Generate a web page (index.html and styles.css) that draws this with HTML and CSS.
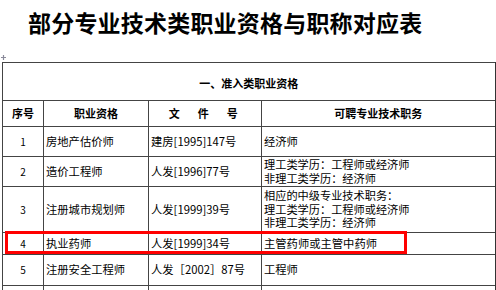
FILE: index.html
```html
<!DOCTYPE html>
<html lang="zh-CN">
<head>
    <meta charset="UTF-8">
    <title>部分专业技术类职业资格与职称对应表</title>
    <link rel="stylesheet" href="styles.css">
</head>
<body>
<h1 class="title">部分专业技术类职业资格与职称对应表</h1>
<div class="sheet">
    <svg class="handle" width="5" height="5" viewBox="0 0 5 5"><path d="M2.5 0V5M0 2.5H5" stroke="#8a8a9a" stroke-width="1.2"/></svg>
    <table class="grid">
        <colgroup>
            <col class="c-no">
            <col class="c-name">
            <col class="c-doc">
            <col class="c-duty">
        </colgroup>
        <tr class="r-caption">
            <td colspan="4" class="caption">一、准入类职业资格</td>
        </tr>
        <tr class="r-head">
            <th>序号</th>
            <th>职业资格</th>
            <th class="spaced">文　件　号</th>
            <th>可聘专业技术职务</th>
        </tr>
        <tr class="r-30">
            <td class="num">1</td>
            <td>房地产估价师</td>
            <td>建房[1995]147号</td>
            <td>经济师</td>
        </tr>
        <tr class="r-30">
            <td class="num">2</td>
            <td>造价工程师</td>
            <td>人发[1996]77号</td>
            <td class="duty">理工类学历：工程师或经济师<br>非理工类学历：经济师</td>
        </tr>
        <tr class="r-46">
            <td class="num">3</td>
            <td>注册城市规划师</td>
            <td>人发[1999]39号</td>
            <td class="duty">相应的中级专业技术职务：<br>理工类学历：工程师或经济师<br>非理工类学历：经济师</td>
        </tr>
        <tr class="r-22">
            <td class="num">4</td>
            <td>执业药师</td>
            <td>人发[1999]34号</td>
            <td>主管药师或主管中药师</td>
        </tr>
        <tr class="r-31">
            <td class="num">5</td>
            <td>注册安全工程师</td>
            <td>人发［2002］87号</td>
            <td>工程师</td>
        </tr>
        <tr class="r-30">
            <td></td>
            <td></td>
            <td></td>
            <td></td>
        </tr>
    </table>
    <div class="mark"></div>
</div>
</body>
</html>
```

FILE: styles.css
```css
body {
    margin: 0;
    background-color: #fff;
    color: #000;
    font-family: "Noto Sans CJK SC", sans-serif;
}

.title {
    margin: 0;
    padding: 11px 0 0 28px;
    font-size: 23px;
    line-height: 23px;
    font-weight: 700;
    letter-spacing: 0.2px;
}

.sheet {
    position: relative;
    margin: 28px 0 0 2px;
    width: 493px;
}

.handle {
    position: absolute;
    left: -1px;
    top: -7px;
}

.grid {
    table-layout: fixed;
    width: 493px;
    border-collapse: collapse;
    border-right: 2px solid #333;
    font-size: 11.3px;
}

.grid td, .grid th {
    border: 1px solid #444;
    padding: 0 2px;
    vertical-align: middle;
    text-align: left;
    line-height: 13.5px;
    white-space: nowrap;
    overflow: hidden;
}

.c-no { width: 41px; }
.c-name { width: 105px; }
.c-doc { width: 113px; }
.c-duty { width: 234px; }

.r-caption { height: 38px; }
.r-head { height: 26px; }
.r-22 { height: 22px; }
.r-30 { height: 30px; }
.r-31 { height: 31px; }
.r-46 { height: 46px; }

.grid .caption {
    text-align: center;
    font-weight: 700;
    font-size: 11px;
    padding-top: 4px;
}

.grid th {
    text-align: center;
    font-size: 11px;
    font-weight: 700;
}

.grid th.spaced {
    letter-spacing: 3.5px;
}

.grid td.num {
    text-align: center;
    font-size: 10px;
}

.grid td.duty {
    font-size: 11.2px;
}

.mark {
    position: absolute;
    left: 3px;
    top: 169px;
    width: 396px;
    height: 17px;
    border: 3px solid #f00;
}
```
